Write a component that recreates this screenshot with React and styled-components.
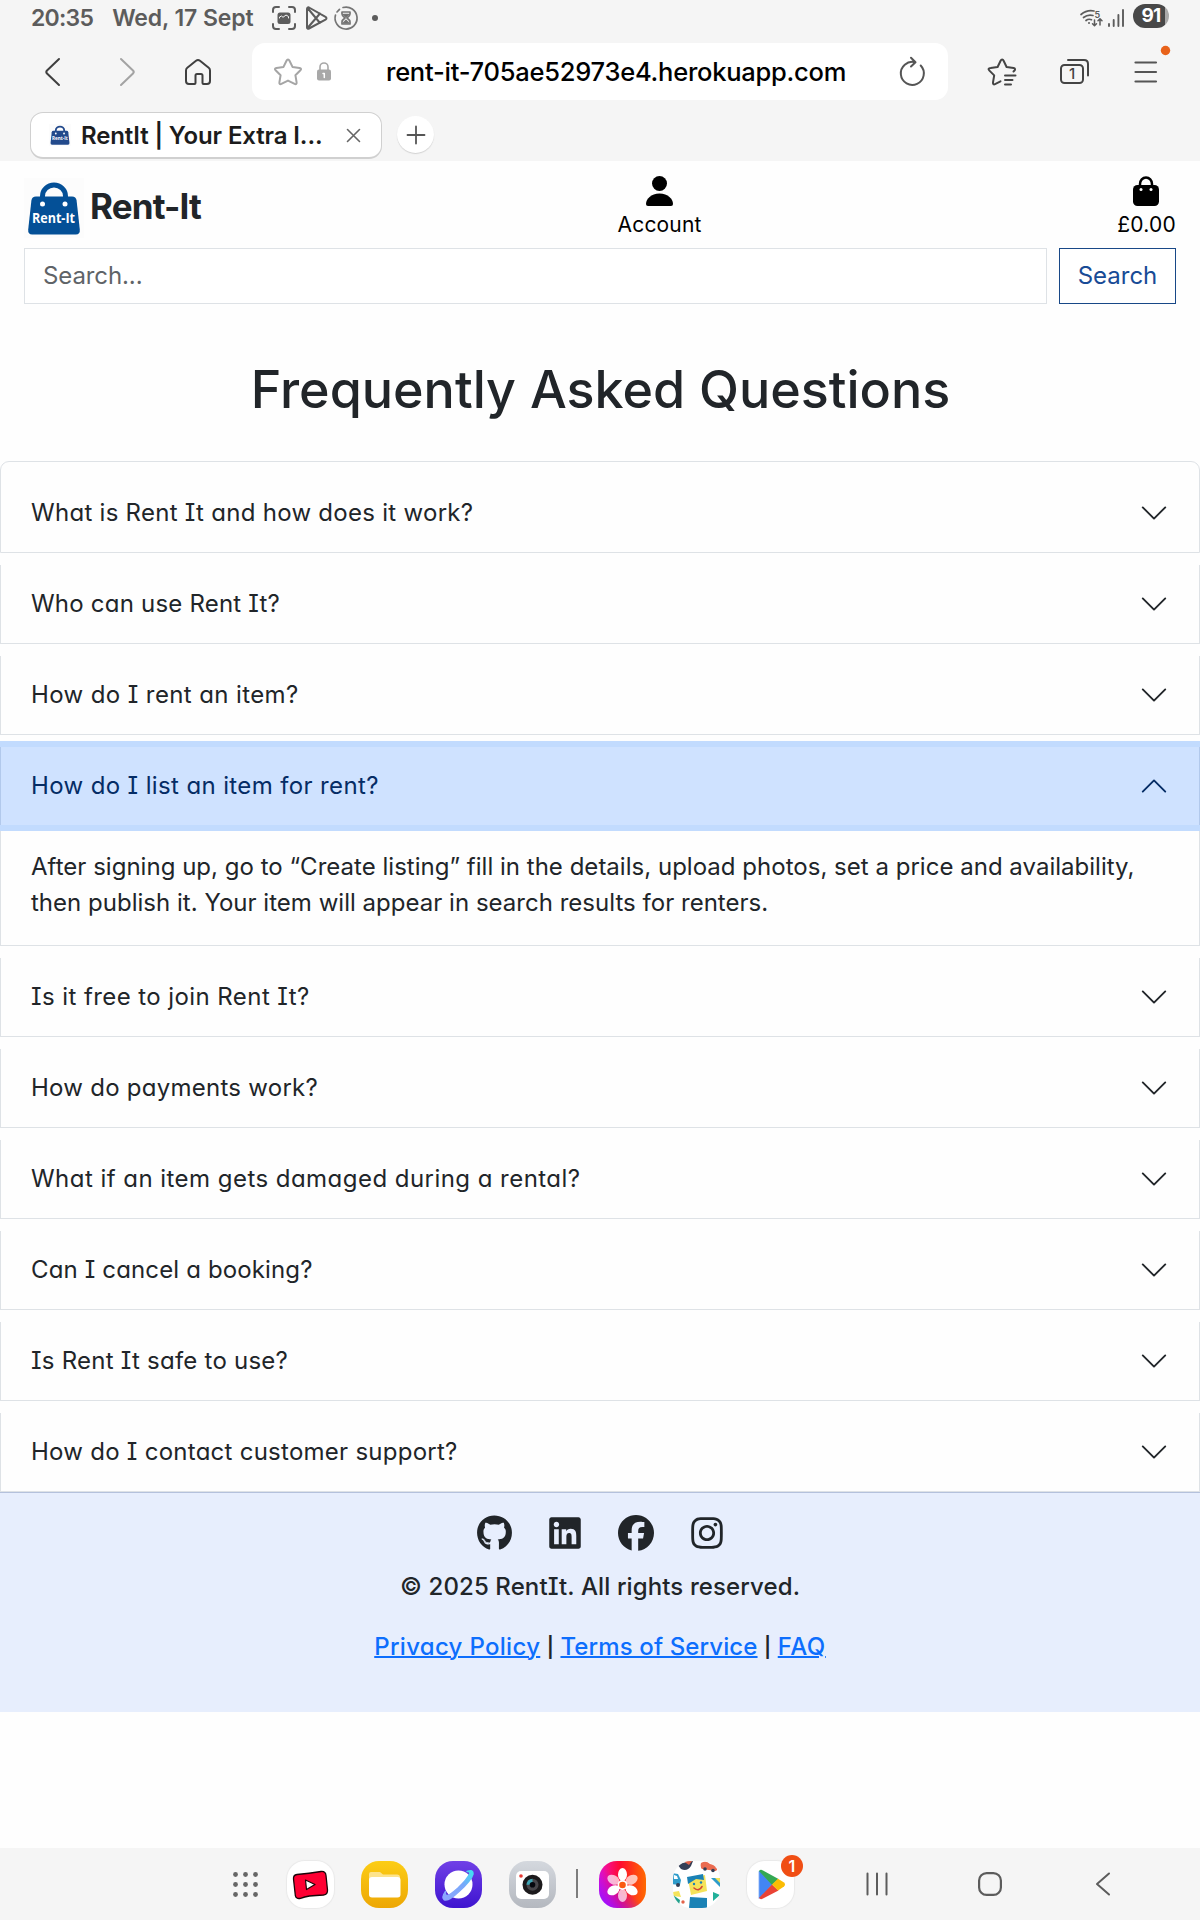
import React, { useState } from "react";
import styled, { createGlobalStyle } from "styled-components";
import { FaGithub, FaLinkedin, FaFacebook, FaInstagram } from "react-icons/fa6";

const Global = createGlobalStyle`
  *, *::before, *::after { box-sizing: border-box; }
  body { margin: 0; background: #fefefe; font-family: Inter, "Liberation Sans", sans-serif; color: #212529; }
  button, input { font: inherit; }
`;

const Screen = styled.div`
  width: 1200px;
  height: 1920px;
  display: flex;
  flex-direction: column;
  overflow: hidden;
`;

const Icon = styled.svg`
  display: block;
  flex: none;
  overflow: visible;
  fill: none;
  stroke-linecap: round;
  stroke-linejoin: round;
  margin-left: ${(p) => p.$left || 0}px;
`;

/* ---------- browser chrome ---------- */

const Chrome = styled.header`
  height: 161px;
  background: #f5f5f5;
  flex: none;
`;

const StatusBar = styled.div`
  display: flex;
  align-items: center;
  height: 36px;
  padding-left: 31px;
  color: #5c5c5c;
  font-size: 23px;
  font-weight: 600;
  line-height: 36px;
`;

const StatusText = styled.span`
  white-space: pre;
  letter-spacing: ${(p) => p.$spacing || 0}px;
  margin-left: ${(p) => p.$left || 0}px;
`;

const StatusEnd = styled.div`
  display: flex;
  align-items: center;
  margin-left: auto;
  padding-right: 31px;
`;

const Battery = styled.div`
  width: 36px;
  height: 24px;
  margin: -4px 0 0 9px;
  border-radius: 12px;
  background: linear-gradient(to right, #484848 0 32px, #a9a9a9 32px);
  color: #fff;
  font-size: 19px;
  font-weight: 700;
  line-height: 23px;
  text-align: center;
  letter-spacing: -0.8px;
`;

const NavBar = styled.div`
  display: flex;
  align-items: center;
  height: 71px;
  padding: 0 41px 0 45px;
`;

const AddressBar = styled.div`
  display: flex;
  align-items: center;
  width: 696px;
  height: 57px;
  margin-left: 41px;
  padding: 0 24px 0 22px;
  border-radius: 13px;
  background: #fff;
`;

const Url = styled.span`
  flex: 1;
  padding-left: 55px;
  color: #000;
  font-size: 25.5px;
  font-weight: 500;
  white-space: nowrap;
  letter-spacing: ${(p) => p.$spacing}px;
`;

const TabBar = styled.div`
  display: flex;
  align-items: center;
  height: 54px;
  padding: 0 0 0 30px;
  gap: 15px;
`;

const Tab = styled.div`
  display: flex;
  align-items: center;
  width: 352px;
  height: 47px;
  margin-top: 3px;
  padding: 0 21px 0 18px;
  border: 1px solid #d0d0d0;
  border-bottom-width: 2px;
  border-radius: 13px;
  background: #fff;
`;

const TabTitle = styled.span`
  flex: 1;
  padding-left: 10px;
  color: #1c1c1c;
  font-size: 24px;
  font-weight: 600;
  white-space: nowrap;
  letter-spacing: ${(p) => p.$spacing}px;
`;

const NewTab = styled.div`
  display: grid;
  place-items: center;
  width: 37px;
  height: 37px;
  margin-top: 1px;
  border-radius: 50%;
  background: #fff;
  box-shadow: 0 1px 1px #d2d2d2;
`;

/* ---------- site header ---------- */

const SiteHeader = styled.div`
  height: 87px;
  padding: 0 24px;
  display: flex;
  justify-content: space-between;
  flex: none;
`;

const Brand = styled.div`
  display: flex;
  align-items: center;
  width: 178px;
  padding-top: 7px;
`;

const BrandName = styled.span`
  margin: -4px 0 0 6px;
  font-size: 35px;
  font-weight: 650;
  line-height: 44px;
  white-space: nowrap;
  letter-spacing: ${(p) => p.$spacing}px;
`;

const HeaderLink = styled.div`
  display: flex;
  flex-direction: column;
  align-items: ${(p) => (p.$end ? "flex-end" : "center")};
  padding-top: 15px;
  color: #000;
  font-size: 21px;
  line-height: 30px;
`;

const HeaderLabel = styled.span`
  margin-top: 4px;
  letter-spacing: ${(p) => p.$spacing || 0}px;
  white-space: nowrap;
`;

const SearchRow = styled.form`
  display: flex;
  gap: 12px;
  height: 56px;
  padding: 0 24px;
  flex: none;
`;

const SearchInput = styled.input`
  flex: 1;
  min-width: 0;
  padding: 0 18px 2px;
  border: 1px solid #dee2e6;
  background: #fff;
  font-size: 24px;
  letter-spacing: -0.1px;
  outline: none;
  &::placeholder { color: #5f6468; opacity: 1; }
`;

const SearchButton = styled.button`
  width: 117px;
  padding: 0 0 2px;
  border: 1px solid #184887;
  background: #fff;
  color: #184b96;
  font-size: 24px;
`;

/* ---------- FAQ ---------- */

const Title = styled.h1`
  height: 157px;
  margin: 0;
  flex: none;
  padding: 53px 0 0 1px;
  text-align: center;
  font-size: 52px;
  font-weight: 500;
  line-height: 66px;
  font-feature-settings: "cv11", "cv08";
  white-space: nowrap;
`;

const Accordion = styled.section`
  flex: none;
  display: flex;
  flex-direction: column;
`;

const Item = styled.div`
  margin-top: 12px;
  border: solid #dee2e6;
  border-width: 0 1px 1px;
  &:first-child {
    margin-top: 0;
    padding-top: 12px;
    border-top-width: 1px;
    border-radius: 9px 9px 0 0;
  }
`;

const Question = styled.button`
  position: relative;
  display: flex;
  align-items: center;
  justify-content: space-between;
  width: 1200px;
  height: 78px;
  margin: 0 -1px;
  padding: 0 30px 1px;
  border: solid ${(p) => (p.$open ? "#b2c9ec" : "#dee2e6")};
  border-width: 0 1px;
  background: ${(p) => (p.$open ? "#cfe2ff" : "#fefefe")};
  box-shadow: ${(p) => (p.$open ? "0 0 0 6px #c2dbfe" : "none")};
  color: ${(p) => (p.$open ? "#052c65" : "#212529")};
  font-size: 24px;
  text-align: left;
  font-feature-settings: "cv11", "cv08";
`;

const QuestionText = styled.span`
  margin-top: -1px;
  white-space: nowrap;
  letter-spacing: ${(p) => p.$spacing}px;
`;

const Answer = styled.p`
  height: 120px;
  margin: 0;
  padding: 24px 0 24px 30px;
  font-size: 24px;
  line-height: 36px;
  white-space: nowrap;
  letter-spacing: 0.02px;
`;

/* ---------- footer ---------- */

const Footer = styled.footer`
  flex: none;
  height: 220px;
  border-top: 1px solid #b4c1dc;
  background: #e7eefd;
  text-align: center;
  font-size: 24px;
  font-weight: 500;
  line-height: 36px;
  font-feature-settings: "cv11", "cv08";
`;

const Socials = styled.div`
  display: flex;
  justify-content: center;
  gap: 37px;
  padding-top: 22px;
  font-size: 36px;
  color: #212529;
  svg { display: block; }
  svg:nth-child(1) { width: 35px; }
  svg:nth-child(2), svg:nth-child(4) { width: 32px; }
`;

const Copyright = styled.p`
  margin: 18px 0 24px;
  letter-spacing: 0.11px;
`;

const FooterLinks = styled.div`
  display: flex;
  justify-content: center;
  gap: 6.5px;
`;

const Pipe = styled.span`
  font-size: 20px;
  font-weight: 600;
`;

const FooterLink = styled.a`
  color: #0d6efd;
  text-decoration: underline;
  text-decoration-thickness: 2px;
  letter-spacing: ${(p) => p.$spacing}px;
`;

/* ---------- system dock ---------- */

const Dock = styled.nav`
  display: flex;
  align-items: center;
  height: 72px;
  margin-top: auto;
  padding-left: 233px;
  background: #f5f5f5;
  flex: none;
`;

const AppTile = styled.div`
  position: relative;
  width: 47px;
  height: 47px;
  margin-left: ${(p) => p.$left ?? 27}px;
  border-radius: 18px;
  background: ${(p) => p.$bg};
  box-shadow: ${(p) => (p.$outlined ? "0 0 1px 1px #e9e9e9" : "none")};
`;

const ClippedTile = styled(AppTile)`
  overflow: hidden;
`;

const Badge = styled.span`
  position: absolute;
  top: -6px;
  right: -9px;
  width: 22px;
  height: 22px;
  border-radius: 50%;
  background: #f04e14;
  color: #fff;
  font-size: 16px;
  font-weight: 600;
  line-height: 22px;
  text-align: center;
`;

const Divider = styled.div`
  width: 2px;
  height: 29px;
  margin: -2px 0 0 20px;
  background: #7d7d7d;
`;

function BagLogo({ size, fill }) {
  return (
    <Icon width={size} height={size} viewBox="0 0 60 60">
      <rect width="60" height="60" fill="#fcfcfc" />
      <path d="M18.500 22v-4a11.500 11 0 0 1 23 0v4" stroke={fill} strokeWidth="5" />
      <path d="M12 18.500h36q4 0 4.600 4l3.200 29q.4 5-4 5H8.200q-4.400 0-4-5l3.200-29q.6-4 4.600-4z" fill={fill} />
      <circle cx="18.500" cy="26" r="2.500" fill="#fff" />
      <circle cx="41" cy="26" r="2.500" fill="#fff" />
      <text x="29.500" y="44.500" textAnchor="middle" textLength="43" lengthAdjust="spacingAndGlyphs" fontFamily="'Open Sans', sans-serif" fontWeight="700" fontSize="13.5" fill="#fff">Rent-It</text>
    </Icon>
  );
}

function Chevron({ open }) {
  return (
    <Icon width="30" height="30" viewBox="0 0 16 16" stroke="currentColor" strokeWidth="1">
      <path d={open ? "M2 11l6-6 6 6" : "M2 5l6 6 6-6"} />
    </Icon>
  );
}

const STAR = "M14 1.500c.8 0 1.100.4 1.500 1.200l3 6.200 7 1c1.700.3 2 1.300.9 2.400l-5 4.900 1.200 7.200c.2 1.500-.6 2.200-2 1.500L14 22.600l-6.600 3.300c-1.400.7-2.200 0-2-1.500l1.200-7.200-5-4.900c-1.100-1.100-.8-2.100.9-2.400l7-1 3-6.200c.4-.8.7-1.200 1.500-1.200z";

const faqs = [
  { text: "What is Rent It and how does it work?", spacing: 0.28 },
  { text: "Who can use Rent It?", spacing: 0.21 },
  { text: "How do I rent an item?", spacing: 0.39 },
  { text: "How do I list an item for rent?", spacing: 0.37 },
  { text: "Is it free to join Rent It?", spacing: 0.42 },
  { text: "How do payments work?", spacing: 0.26 },
  { text: "What if an item gets damaged during a rental?", spacing: 0.46 },
  { text: "Can I cancel a booking?", spacing: 0.14 },
  { text: "Is Rent It safe to use?", spacing: 0.24 },
  { text: "How do I contact customer support?", spacing: 0.26 },
];

export default function App() {
  const [open, setOpen] = useState(3);
  return (
    <Screen>
      <Global />
      <Chrome>
        <StatusBar>
          <StatusText $spacing={-0.75}>20:35</StatusText>
          <StatusText $left={19} $spacing={-0.12}>Wed, 17 Sept</StatusText>
          <Icon $left={19} width="24" height="24" viewBox="0 0 24 24" stroke="#5c5c5c" strokeWidth="2">
            <path d="M1 6V4a3 3 0 0 1 3-3h3M17 1h3a3 3 0 0 1 3 3v2M23 18v2a3 3 0 0 1-3 3h-3M7 23H4a3 3 0 0 1-3-3v-2" />
            <rect x="5.500" y="6.500" width="13" height="11.500" rx="2.500" fill="#5c5c5c" stroke="none" />
            <path d="M7.500 12v-1l2-1 1.500 1.300L14 9l2.500 1.500v1.500" stroke="#f5f5f5" strokeWidth="1" />
          </Icon>
          <Icon $left={9} width="23" height="24" viewBox="0 0 23 24" stroke="#5c5c5c" strokeWidth="2">
            <path d="M2 3v18.500c0 1 1 1.500 2 1L20.500 13.600c1.300-.8 1.300-2 0-2.800L4 1.500C3 1 2 1.500 2 3zM2.500 2l12.500 15M2.500 22L15 7.500" />
          </Icon>
          <Icon $left={6} width="24" height="24" viewBox="0 0 24 24" stroke="#757575" strokeWidth="1.700">
            <path d="M9 1.500A11 11 0 1 1 1.500 9M3 6l2.500-2.700" />
            <path d="M8 6h8v2c0 2-1.500 3-3 4 1.500 1 3 2 3 4v2H8v-2c0-2 1.500-3 3-4-1.500-1-3-2-3-4z" />
            <path d="M9.500 17l2.500-2.500 2.500 2.500zM9.500 8.500h5L12 11z" fill="#5c5c5c" />
          </Icon>
          <Icon $left={14} width="6" height="6" viewBox="0 0 6 6"><circle cx="3" cy="3" r="3" fill="#5c5c5c" /></Icon>
          <StatusEnd>
            <Icon width="23" height="18" viewBox="0 0 23 18" stroke="#5c5c5c" strokeWidth="1.700">
              <path d="M1 5.500Q7 .5 14 2M3.500 8.500Q8 5 13 6.500M6 11.500q2.500-2 5.500-.8" />
              <circle cx="9" cy="14" r="1" fill="#5c5c5c" stroke="none" />
              <path d="M14.500 11v5.500M12.500 14.700l2 2 2-2M20 16v-6M18 11.700l2-2 2 2" strokeWidth="1.500" />
              <text x="14.500" y="8.500" fontSize="9" fontWeight="600" fill="#5c5c5c" stroke="none">5</text>
            </Icon>
            <Icon $left={5} width="16" height="18" viewBox="0 0 16 18" stroke="#5c5c5c" strokeWidth="1.900">
              <path d="M1 15v2M5.700 11v6M10.400 6v11M15 1v16" />
            </Icon>
            <Battery>91</Battery>
          </StatusEnd>
        </StatusBar>
        <NavBar>
          <Icon width="15" height="28" viewBox="0 0 15 28" stroke="#3f3f3f" strokeWidth="2"><path d="M14 1L2 12.500q-1.500 1.500 0 3L14 27" /></Icon>
          <Icon $left={60} width="15" height="28" viewBox="0 0 15 28" stroke="#a3a3a3" strokeWidth="2"><path d="M1 1l12 11.500q1.500 1.500 0 3L1 27" /></Icon>
          <Icon $left={50} width="26" height="26" viewBox="0 0 26 26" stroke="#3f3f3f" strokeWidth="2">
            <path d="M1 11.500q0-1.800 1.300-2.800L11 1.700q2-1.500 4 0l8.700 7q1.300 1 1.300 2.800V22q0 3-3 3h-3.500q-1 0-1-1v-7.500q0-1.500-1.500-1.500h-4q-1.500 0-1.500 1.500V24q0 1-1 1H4q-3 0-3-3z" />
          </Icon>
          <AddressBar>
            <Icon width="28" height="28" viewBox="0 0 28 28" stroke="#a5a5a5" strokeWidth="2"><path d={STAR} /></Icon>
            <Icon $left={15} width="14" height="19" viewBox="0 0 14 19">
              <path d="M3 9V5a4 4 0 0 1 8 0v4" stroke="#a8a8a8" strokeWidth="1.600" />
              <rect y="7.500" width="14" height="11" rx="2" fill="#a8a8a8" />
              <path d="M6 11.500h1.300v4" stroke="#fff" strokeWidth="1.500" />
            </Icon>
            <Url $spacing={-0.24}>rent-it-705ae52973e4.herokuapp.com</Url>
            <Icon width="25" height="29" viewBox="0 0 25 29" stroke="#555" strokeWidth="2">
              <path d="M21.700 8.500A11.500 11.500 0 1 1 16 5.200M12 .8l4.500 4.400-4.500 4.300" />
            </Icon>
          </AddressBar>
          <Icon $left={40} width="28" height="28" viewBox="0 0 28 28" stroke="#444" strokeWidth="2">
            <path d="M25.500 13.500l1-1c1-1.100.7-2.200-.9-2.500l-7-1-3-6.300c-.7-1.500-2.200-1.500-3 0l-3 6.300-7 1C.5 10.200 0 11.200 1.200 12.400l5 5-1.200 7c-.2 1.700.7 2.400 2 1.700l5.500-2.800" />
            <path d="M17 17.500h10.500M17 22h7.500M17 26.500h6" />
          </Icon>
          <Icon $left={44} width="29" height="25" viewBox="0 0 29 25" stroke="#444" strokeWidth="2">
            <rect x="1" y="6" width="22" height="18" rx="3.500" />
            <path d="M8 1h16q4 0 4 4v11.500" />
            <text x="12" y="20.200" fontSize="15" fontWeight="500" textAnchor="middle" fill="#444" stroke="none">1</text>
          </Icon>
          <Icon $left={45} width="24" height="22" viewBox="0 0 24 22" stroke="#555" strokeWidth="2.200">
            <path d="M1.500 1.500h20.500M1.500 11h20.500M1.500 20.500h20.500" />
            <circle cx="31.500" cy="-10.500" r="4.700" fill="#e8621a" stroke="none" />
          </Icon>
        </NavBar>
        <TabBar>
          <Tab>
            <BagLogo size={22} fill="#234a8c" />
            <TabTitle $spacing={-0.12}>RentIt | Your Extra I...</TabTitle>
            <Icon width="13" height="13" viewBox="0 0 13 13" stroke="#666" strokeWidth="1.600"><path d="M.5.5l12 12M12.500.5l-12 12" /></Icon>
          </Tab>
          <NewTab>
            <Icon width="18" height="18" viewBox="0 0 18 18" stroke="#555" strokeWidth="1.800"><path d="M9 .5v17M.5 9h17" /></Icon>
          </NewTab>
        </TabBar>
      </Chrome>

      <SiteHeader>
        <Brand>
          <BagLogo size={60} fill="#045097" />
          <BrandName $spacing={-0.85}>Rent-It</BrandName>
        </Brand>
        <HeaderLink>
          <Icon width="27" height="30" viewBox="0 0 27 30">
            <ellipse cx="13.500" cy="7.500" rx="7.500" ry="7.500" fill="#000" />
            <path d="M2 30q-2 0-2-2c0-5 5-10.500 13.500-10.500S27 23 27 28q0 2-2 2z" fill="#000" />
          </Icon>
          <HeaderLabel $spacing={0.2}>Account</HeaderLabel>
        </HeaderLink>
        <HeaderLink $end>
          <Icon width="43" height="30" viewBox="0 0 43 30">
            <path d="M7 12V8a6 6.500 0 0 1 12 0v4" stroke="#000" strokeWidth="2.500" />
            <rect x="0" y="9" width="26" height="21" rx="4.500" fill="#000" />
            <circle cx="8" cy="13.500" r="1.500" fill="#fff" /><circle cx="18" cy="13.500" r="1.500" fill="#fff" />
          </Icon>
          <HeaderLabel $spacing={0.25}>£0.00</HeaderLabel>
        </HeaderLink>
      </SiteHeader>
      <SearchRow onSubmit={(e) => e.preventDefault()}>
        <SearchInput placeholder="Search..." />
        <SearchButton>Search</SearchButton>
      </SearchRow>

      <Title>Frequently Asked Questions</Title>
      <Accordion>
        {faqs.map(({ text, spacing }, i) => (
          <Item key={text}>
            <Question $open={open === i} onClick={() => setOpen(open === i ? -1 : i)}>
              <QuestionText $spacing={spacing}>{text}</QuestionText>
              <Chevron open={open === i} />
            </Question>
            {open === i && (
              <Answer>
                After signing up, go to “Create listing” fill in the details, upload photos, set a price and availability,
                <br />
                then publish it. Your item will appear in search results for renters.
              </Answer>
            )}
          </Item>
        ))}
      </Accordion>

      <Footer>
        <Socials>
          <FaGithub /><FaLinkedin /><FaFacebook /><FaInstagram />
        </Socials>
        <Copyright>© 2025 RentIt. All rights reserved.</Copyright>
        <FooterLinks>
          <FooterLink $spacing={0.3}>Privacy Policy</FooterLink>
          <Pipe>|</Pipe>
          <FooterLink $spacing={0.12}>Terms of Service</FooterLink>
          <Pipe>|</Pipe>
          <FooterLink $spacing={0.5}>FAQ</FooterLink>
        </FooterLinks>
      </Footer>

      <Dock>
        <Icon width="25" height="25" viewBox="0 0 25 25">
          {[2.5, 12.5, 22.5].map((y) => [2.5, 12.5, 22.5].map((x) => <circle key={x + "-" + y} cx={x} cy={y} r="2.400" fill="#666" />))}
        </Icon>
        <AppTile $left={29} $bg="#fff" $outlined>
          <Icon width="47" height="47" viewBox="0 0 47 47">
            <path d="M10 13.500Q22 12.500 34 10.500q4.500-.5 5 4L40.500 29q.3 4.500-4 5-8 .3-14 1-5 .7-9 2.300-4.500 1-5.200-3L6.500 18q-.3-4 3.500-4.500z" fill="#ff0033" stroke="#1a0508" strokeWidth="1.300" />
            <path d="M18.500 19l9.500 4.500-8.500 5z" fill="#fff" stroke="#1a0508" strokeWidth="1.200" />
          </Icon>
        </AppTile>
        <AppTile $bg="linear-gradient(#fccd15, #eda705)">
          <Icon width="47" height="47" viewBox="0 0 47 47">
            <path d="M8 13q0-2 2-2h9l3 2.500h14q3 0 3 3v6H8z" fill="#fde38c" />
            <rect x="8" y="16" width="31.500" height="20.500" rx="3" fill="#fff" />
          </Icon>
        </AppTile>
        <AppTile $bg="linear-gradient(#7040e6, #3e14d0)">
          <Icon width="47" height="47" viewBox="0 0 47 47">
            <defs><linearGradient id="orbit" x1="0" y1="1" x2="1" y2="0"><stop offset="0" stopColor="#8ea6ff" /><stop offset=".6" stopColor="#78a8fa" /><stop offset="1" stopColor="#3ce4f2" /></linearGradient></defs>
            <circle cx="23.500" cy="23.500" r="14" fill="#fff" />
            <path d="M10.500 30.500Q6.500 36.500 9 38.500q4 2.500 15-8Q36.500 19 38 13q.5-5-6-2.500 3.500-.5 2.500 2.500-2 5-11.500 14-9 8-11.500 7.500-1.500-.5-1-4z" fill="url(#orbit)" stroke="url(#orbit)" strokeWidth="1.500" />
          </Icon>
        </AppTile>
        <AppTile $bg="linear-gradient(#d4d8de, #b4b8bf)">
          <Icon width="47" height="47" viewBox="0 0 47 47">
            <rect x="7" y="10" width="33" height="28" rx="5" fill="#fff" />
            <circle cx="12" cy="15" r="1.800" fill="#e83a34" />
            <circle cx="23.500" cy="23.800" r="10" fill="#1c1a1c" />
            <circle cx="23.500" cy="23.800" r="6" fill="#48464a" />
            <path d="M23.500 17.800a6 6 0 0 0-6 6h6z" fill="#3fa5b5" />
            <circle cx="23.500" cy="23.800" r="2.800" fill="#05070d" />
          </Icon>
        </AppTile>
        <Divider />
        <AppTile $left={21} $bg="linear-gradient(45deg, #a010ff 10%, transparent 50%), linear-gradient(to right, #f010c0, #ff0a30 45%, #ff6a00)">
          <Icon width="47" height="47" viewBox="0 0 47 47">
            {[60, 180, 300, 0, 120, 240].map((a) => (
              <ellipse key={a} cx="23.500" cy="13.500" rx="4.500" ry="6.500" fill="#fff" opacity={[60, 180, 300].includes(a) ? 0.7 : 1} transform={`rotate(${a} 23.500 24)`} />
            ))}
            <circle cx="23.500" cy="24" r="5" fill="#fff" /><circle cx="23.500" cy="24" r="3.300" fill="#fa5a10" />
          </Icon>
        </AppTile>
        <ClippedTile $bg="#fff">
          <Icon width="47" height="47" viewBox="0 0 47 47">
            <path d="M4 3L20 0l-2 5q-4 6-10 3z" fill="#343f56" /><path d="M10 0h9l-3 4z" fill="#e2634a" />
            <path d="M28 2q5-3 9 1l7 2q1 3-1 5L29 8q-2-2-1-6z" fill="#ea6b50" /><circle cx="32" cy="8" r="1.800" fill="#343f56" /><circle cx="40" cy="9.500" r="1.800" fill="#343f56" />
            <path d="M-1 12l6 1 3 6-1 5-8-1z" fill="#2f9ccb" /><path d="M1 14l3 1 1 3-4 0z" fill="#fff" /><circle cx="5" cy="24" r="2" fill="#343f56" />
            <path d="M15 18l17-4 2 16-16 4z" fill="#f5e35a" /><path d="M14 16l16-3 1 6-8-1-8 5z" fill="#1b82b5" />
            <circle cx="21" cy="23" r="1.200" fill="#1b82b5" /><circle cx="28" cy="21.500" r="1.200" fill="#1b82b5" /><path d="M21 27q5 4 8-1.500" stroke="#d34735" strokeWidth="1.600" />
            <path d="M17 36l17 1v10l-18 0z" fill="#1b82b5" />
            <path d="M38 17l9 0v9z" fill="#2f9ccb" /><path d="M42 17l5 0v5z" fill="#f5e35a" />
            <path d="M40 31l7 3-7 6z" fill="#22b09a" /><path d="M0 31l6-1 2 6-8-1z" fill="#f5e35a" /><path d="M0 34l7 5-1 5-6-2z" fill="#22a08c" /><circle cx="10" cy="41" r="1.700" fill="#e2634a" />
          </Icon>
        </ClippedTile>
        <AppTile $bg="#fff" $outlined>
          <Icon width="47" height="47" viewBox="0 0 47 47">
            <path d="M12.500 10.500L25 23.500 12.500 37z" fill="#4285f4" stroke="#4285f4" />
            <path d="M12 10q1.500-2 4-.5L31.500 18 25 24z" fill="#34a853" />
            <path d="M12 37q1.500 2 4 .5L31.500 29.500 25 23.500z" fill="#ea4335" />
            <path d="M31 17.800l6 3.700q2 2 0 4L31 29.500l-6-6z" fill="#fbbc04" />
          </Icon>
          <Badge>1</Badge>
        </AppTile>
        <Icon $left={72} width="22" height="24" viewBox="0 0 22 24" stroke="#5c5c5c" strokeWidth="2"><path d="M1.500 1.500v21M11 1.500v21M20.500 1.500v21" /></Icon>
        <Icon $left={90} width="24" height="24" viewBox="0 0 24 24" stroke="#5c5c5c" strokeWidth="2.200"><rect x="1.100" y="1.100" width="21.800" height="21.800" rx="7.500" /></Icon>
        <Icon $left={94} width="14" height="24" viewBox="0 0 14 24" stroke="#5c5c5c" strokeWidth="2"><path d="M13 1.500L1 12l12 10.500" /></Icon>
      </Dock>
    </Screen>
  );
}
